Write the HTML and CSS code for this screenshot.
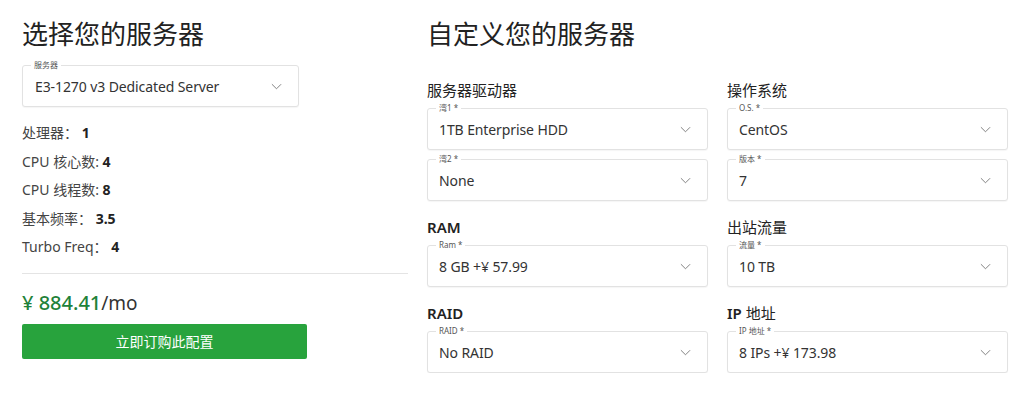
FILE: index.html
```html
<!DOCTYPE html>
<html lang="zh-CN">
<head>
<meta charset="UTF-8" />
<meta name="viewport" content="width=device-width, initial-scale=1" />
<title>服务器配置</title>
<link rel="stylesheet" href="styles.css">
</head>
<body>
<div class="page">
  <section class="choose">
    <h1 class="page-title">选择您的服务器</h1>
    <div class="field field-wide">
      <span class="field-label">服务器</span>
      <span class="field-value">E3-1270 v3 Dedicated Server</span>
      <svg class="chevron" viewBox="0 0 12 7"><path d="M1 1l5 5 5-5" /></svg>
    </div>
    <ul class="specs">
      <li>处理器： <b>1</b></li>
      <li>CPU 核心数: <b>4</b></li>
      <li>CPU 线程数: <b>8</b></li>
      <li>基本频率： <b>3.5</b></li>
      <li>Turbo Freq： <b>4</b></li>
    </ul>
    <hr class="divider">
    <div class="price"><span class="amount">¥ 884.41</span>/mo</div>
    <button class="order-btn">立即订购此配置</button>
  </section>

  <section class="customize">
    <h1 class="page-title">自定义您的服务器</h1>
    <div class="option-grid">
      <div class="group">
        <h3 class="group-title">服务器驱动器</h3>
        <div class="field">
          <span class="field-label">湾1 *</span>
          <span class="field-value">1TB Enterprise HDD</span>
          <svg class="chevron" viewBox="0 0 12 7"><path d="M1 1l5 5 5-5" /></svg>
        </div>
        <div class="field">
          <span class="field-label">湾2 *</span>
          <span class="field-value">None</span>
          <svg class="chevron" viewBox="0 0 12 7"><path d="M1 1l5 5 5-5" /></svg>
        </div>
      </div>
      <div class="group">
        <h3 class="group-title">操作系统</h3>
        <div class="field">
          <span class="field-label">O.S. *</span>
          <span class="field-value">CentOS</span>
          <svg class="chevron" viewBox="0 0 12 7"><path d="M1 1l5 5 5-5" /></svg>
        </div>
        <div class="field">
          <span class="field-label">版本 *</span>
          <span class="field-value">7</span>
          <svg class="chevron" viewBox="0 0 12 7"><path d="M1 1l5 5 5-5" /></svg>
        </div>
      </div>
      <div class="group">
        <h3 class="group-title"><span class="latin">RAM</span></h3>
        <div class="field">
          <span class="field-label">Ram *</span>
          <span class="field-value">8 GB +¥ 57.99</span>
          <svg class="chevron" viewBox="0 0 12 7"><path d="M1 1l5 5 5-5" /></svg>
        </div>
      </div>
      <div class="group">
        <h3 class="group-title">出站流量</h3>
        <div class="field">
          <span class="field-label">流量 *</span>
          <span class="field-value">10 TB</span>
          <svg class="chevron" viewBox="0 0 12 7"><path d="M1 1l5 5 5-5" /></svg>
        </div>
      </div>
      <div class="group">
        <h3 class="group-title"><span class="latin">RAID</span></h3>
        <div class="field">
          <span class="field-label">RAID *</span>
          <span class="field-value">No RAID</span>
          <svg class="chevron" viewBox="0 0 12 7"><path d="M1 1l5 5 5-5" /></svg>
        </div>
      </div>
      <div class="group">
        <h3 class="group-title"><span class="latin">IP</span> 地址</h3>
        <div class="field">
          <span class="field-label">IP 地址 *</span>
          <span class="field-value">8 IPs +¥ 173.98</span>
          <svg class="chevron" viewBox="0 0 12 7"><path d="M1 1l5 5 5-5" /></svg>
        </div>
      </div>
    </div>
  </section>
</div>
</body>
</html>
```

FILE: styles.css
```css
body, html {
  margin: 0; padding: 0; background: #fff; color: #333;
  font-family: "Noto Sans", "Noto Sans CJK SC", sans-serif;
}
.page {
  display: flex; gap: 19px; padding: 0 16px 0 22px;
}
.choose {
  width: 386px; flex-shrink: 0;
}
.customize {
  width: 581px;
}
.page-title {
  margin: 17px 0 0; font-size: 26px; line-height: 34px; font-weight: 400; color: #222;
}
.field {
  position: relative; height: 42px; box-sizing: border-box;
  border: 1px solid #e2e2e2; border-radius: 3px; box-shadow: 0 1px 1px rgba(0,0,0,0.04);
  display: flex; align-items: center; padding: 0 16px 0 11px; background: #fff;
}
.field-wide {
  width: 277px; margin-top: 14px; padding-left: 12px;
}
.field-label {
  position: absolute; left: 8px; top: -6px; padding: 0 3px; background: #fff;
  font-size: 8px; line-height: 10px; color: #555;
}
.field-value {
  flex-grow: 1; font-size: 14px; color: #333; white-space: nowrap; letter-spacing: -0.1px;
}
.chevron {
  width: 11px; height: 7px; fill: none; stroke: #777; stroke-width: 1;
}
.specs {
  list-style: none; margin: 12px 0 0; padding: 0;
}
.specs li {
  font-size: 14px; line-height: 28.5px; color: #444;
}
.specs b {
  color: #222; font-weight: 700;
}
.divider {
  margin: 11px 0 0; border: none; border-top: 1px solid #e4e4e4;
}
.price {
  margin-top: 16px; font-size: 19px; line-height: 26px; color: #333;
}
.price .amount {
  color: #1f8239; font-weight: 500; font-size: 20px;
}
.order-btn {
  display: block; width: 285px; height: 35px; margin-top: 8px;
  background: #28a33d; border: none; border-radius: 2px; color: #fff;
  font-family: inherit; font-size: 14px; cursor: pointer;
}
.option-grid {
  display: grid; grid-template-columns: 281px 281px; column-gap: 19px; row-gap: 16px;
  margin-top: 29px;
}
.group {
  display: flex; flex-direction: column; gap: 9px;
}
.group-title {
  margin: 0 0 -1px; font-size: 15px; line-height: 20px; font-weight: 400; color: #222;
}
.group-title .latin {
  font-weight: 600;
}
```
